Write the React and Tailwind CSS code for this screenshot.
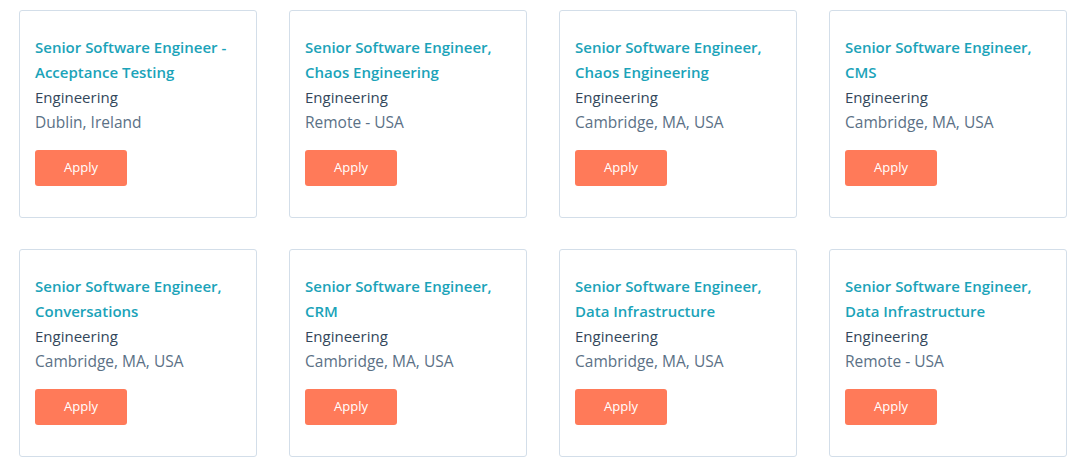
const jobs = [
  { title: 'Senior Software Engineer - Acceptance Testing', location: 'Dublin, Ireland' },
  { title: 'Senior Software Engineer, Chaos Engineering', location: 'Remote - USA' },
  { title: 'Senior Software Engineer, Chaos Engineering', location: 'Cambridge, MA, USA' },
  { title: 'Senior Software Engineer, CMS', location: 'Cambridge, MA, USA' },
  { title: 'Senior Software Engineer, Conversations', location: 'Cambridge, MA, USA' },
  { title: 'Senior Software Engineer, CRM', location: 'Cambridge, MA, USA' },
  { title: 'Senior Software Engineer, Data Infrastructure', location: 'Cambridge, MA, USA' },
  { title: 'Senior Software Engineer, Data Infrastructure', location: 'Remote - USA' },
]

function JobCard({ job }) {
  return (
    <div className="h-[208px] rounded-[3px] border border-[#d3dee9] bg-white px-[15px] pt-[24px]">
      <a href="#" className="block text-[15px] font-semibold leading-[25px] text-[#1ba3b9]">
        {job.title}
      </a>
      <p className="text-[15px] font-medium leading-[25px] text-[#33475b]">Engineering</p>
      <p className="text-[15.5px] leading-[25px] text-[#5b7186]">{job.location}</p>
      <button className="mt-[15px] h-[36px] w-[92px] rounded-[3px] bg-[#ff7a59] text-[13px] font-medium text-white">
        Apply
      </button>
    </div>
  )
}

export default function App() {
  return (
    <div className="min-h-[466px] bg-white pl-[19px] pt-[10px] font-['Open_Sans',sans-serif]">
      <div className="grid w-[1048px] grid-cols-[238px_238px_238px_238px] gap-x-[32px] gap-y-[31px]">
        {jobs.map((job, i) => (
          <JobCard key={i} job={job} />
        ))}
      </div>
    </div>
  )
}
